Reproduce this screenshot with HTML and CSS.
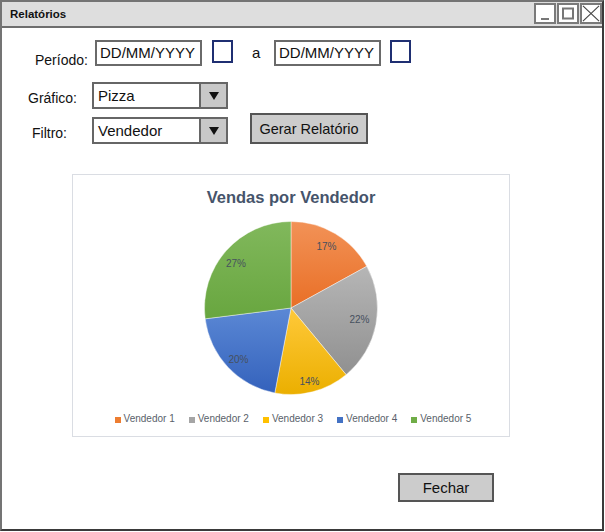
FILE: index.html
```html
<!DOCTYPE html>
<html lang="pt">
<head>
<meta charset="utf-8">
<title>Relatórios</title>
<link rel="stylesheet" href="styles.css">
</head>
<body>
<div class="window">
  <div class="titlebar">
    <span class="title">Relatórios</span>
    <div class="controls">
      <span class="ctl"><svg width="18" height="17" viewBox="0 0 18 17"><line x1="5" y1="14" x2="13" y2="14" stroke="#777" stroke-width="2"/></svg></span>
      <span class="ctl"><svg width="18" height="17" viewBox="0 0 18 17"><rect x="4" y="3.5" width="10" height="10" fill="none" stroke="#777" stroke-width="2"/></svg></span>
      <span class="ctl"><svg width="19" height="17" viewBox="0 0 19 17"><line x1="1" y1="0.5" x2="18" y2="16.5" stroke="#444" stroke-width="1.2"/><line x1="18" y1="0.5" x2="1" y2="16.5" stroke="#444" stroke-width="1.2"/></svg></span>
    </div>
  </div>
  <div class="content">
    <div class="row row-period">
      <span class="label label-period">Período:</span>
      <div class="field">DD/MM/YYYY</div>
      <span class="check"></span>
      <span class="sep">a</span>
      <div class="field">DD/MM/YYYY</div>
      <span class="check check-2"></span>
    </div>
    <div class="row row-graph">
      <span class="label label-graph">Gráfico:</span>
      <div class="select"><span class="select-text">Pizza</span><span class="select-arrow"><svg width="10" height="8" viewBox="0 0 10 8"><path d="M0,0 L10,0 L5,8 Z" fill="#111"/></svg></span></div>
    </div>
    <div class="row row-filter">
      <span class="label label-filter">Filtro:</span>
      <div class="select select-filter"><span class="select-text">Vendedor</span><span class="select-arrow"><svg width="10" height="8" viewBox="0 0 10 8"><path d="M0,0 L10,0 L5,8 Z" fill="#111"/></svg></span></div>
      <button class="btn btn-gerar">Gerar Relatório</button>
    </div>
    <div class="chart">
      <div class="chart-title">Vendas por Vendedor</div>
      <svg class="pie" width="180" height="178" viewBox="0 0 180 178">
        <defs>
          <linearGradient id="gO" x1="0" y1="0" x2="0" y2="1"><stop offset="0" stop-color="#F29257"/><stop offset="1" stop-color="#E96F26"/></linearGradient>
          <linearGradient id="gG" x1="0" y1="0" x2="0" y2="1"><stop offset="0" stop-color="#B6B6B6"/><stop offset="1" stop-color="#909090"/></linearGradient>
          <linearGradient id="gY" x1="0" y1="0" x2="0" y2="1"><stop offset="0" stop-color="#FFC93A"/><stop offset="1" stop-color="#EBAF00"/></linearGradient>
          <linearGradient id="gB" x1="0" y1="0" x2="0" y2="1"><stop offset="0" stop-color="#5B88D5"/><stop offset="1" stop-color="#3462BC"/></linearGradient>
          <linearGradient id="gV" x1="0" y1="0" x2="0" y2="1"><stop offset="0" stop-color="#81B85C"/><stop offset="1" stop-color="#68A63F"/></linearGradient>
        </defs>
        <g stroke="#ffffff" stroke-width="0.6" stroke-opacity="0.7">
          <path d="M90,89 L90,2.5 A86.5,86.5 0 0 1 165.80,47.32 Z" fill="url(#gO)"/>
          <path d="M90,89 L165.80,47.32 A86.5,86.5 0 0 1 145.13,155.65 Z" fill="url(#gG)"/>
          <path d="M90,89 L145.13,155.65 A86.5,86.5 0 0 1 73.79,173.97 Z" fill="url(#gY)"/>
          <path d="M90,89 L73.79,173.97 A86.5,86.5 0 0 1 4.18,99.84 Z" fill="url(#gB)"/>
          <path d="M90,89 L4.18,99.84 A86.5,86.5 0 0 1 90,2.5 Z" fill="url(#gV)"/>
        </g>
        <g class="pct">
          <text x="125.5" y="30.5">17%</text>
          <text x="158.5" y="104">22%</text>
          <text x="108.5" y="166">14%</text>
          <text x="37.5" y="143.5">20%</text>
          <text x="35" y="47.5">27%</text>
        </g>
      </svg>
      <div class="legend">
        <span class="item"><i class="sw sw-1"></i>Vendedor 1</span>
        <span class="item"><i class="sw sw-2"></i>Vendedor 2</span>
        <span class="item"><i class="sw sw-3"></i>Vendedor 3</span>
        <span class="item"><i class="sw sw-4"></i>Vendedor 4</span>
        <span class="item"><i class="sw sw-5"></i>Vendedor 5</span>
      </div>
    </div>
    <div class="footer">
      <button class="btn btn-fechar">Fechar</button>
    </div>
  </div>
</div>
</body>
</html>
```

FILE: styles.css
```css
* { box-sizing: border-box; }
html, body { margin: 0; padding: 0; background: #ffffff; }
body { font-family: "Liberation Sans", Arial, sans-serif; color: #111; }

.window {
  width: 604px;
  height: 531px;
  border: 2px solid #747474;
  border-right-color: #3a3a3a;
  border-bottom-color: #3a3a3a;
  background: #ffffff;
  display: flex;
  flex-direction: column;
}

.titlebar {
  height: 26px;
  flex: none;
  background: #dedede;
  border-bottom: 2px solid #6e6e6e;
  display: flex;
  align-items: flex-start;
}
.title {
  font-weight: bold;
  font-size: 11.5px;
  line-height: 24px;
  padding-left: 8px;
  color: #111;
}
.controls {
  margin-left: auto;
  display: flex;
  gap: 1px;
  padding-top: 1px;
}
.ctl {
  width: 22px;
  height: 21px;
  border: 2px solid #7a7a7a;
  background: #ffffff;
  display: flex;
  align-items: center;
  justify-content: center;
}

.content { flex: 1; display: flex; flex-direction: column; }

.row { display: flex; align-items: flex-start; flex: none; }
.row-period { margin-top: 12px; height: 26px; }
.row-graph { margin-top: 16px; height: 27px; }
.row-filter { margin-top: 4px; height: 31px; }

.label { font-size: 14px; line-height: 18px; white-space: nowrap; }
.label-period { margin-left: 33px; width: 60px; margin-top: 11px; }
.label-graph { margin-left: 26px; width: 64px; margin-top: 7px; }
.label-filter { margin-left: 30px; width: 60px; margin-top: 11px; }

.field {
  width: 107px;
  height: 26px;
  border: 2px solid #6a6a6a;
  font-size: 15px;
  line-height: 22px;
  padding-left: 3px;
  white-space: nowrap;
}
.check {
  width: 21px;
  height: 23px;
  margin-left: 10px;
  border: 2px solid #1f2f72;
}
.check-2 { margin-left: 9px; }
.sep {
  width: 41px;
  font-size: 15px;
  line-height: 26px;
  padding-left: 19px;
}

.select {
  width: 136px;
  height: 27px;
  border: 2px solid #666;
  display: flex;
}
.select-filter { margin-top: 4px; }
.select-text {
  flex: 1;
  font-size: 15px;
  line-height: 23px;
  padding-left: 4px;
}
.select-arrow {
  width: 27px;
  border-left: 2px solid #666;
  background: #c8c8c8;
  display: flex;
  align-items: center;
  justify-content: center;
}

.btn {
  font-family: "Liberation Sans", Arial, sans-serif;
  background: #cccccc;
  border: 2px solid #555;
  color: #111;
  padding: 0;
  cursor: default;
}
.btn-gerar {
  width: 118px;
  height: 31px;
  margin-left: 22px;
  font-size: 14.5px;
}

.chart {
  flex: none;
  margin-top: 30px;
  margin-left: 70px;
  width: 438px;
  height: 263px;
  border: 1px solid #dadde3;
  display: flex;
  flex-direction: column;
  align-items: center;
}
.chart-title {
  margin-top: 10px;
  font-size: 16.5px;
  line-height: 24px;
  font-weight: bold;
  color: #46546b;
}
.pie { display: block; margin-top: 10px; }
.pct text {
  font-family: "Liberation Sans", Arial, sans-serif;
  font-size: 10px;
  fill: #46505e;
  text-anchor: middle;
}
.legend {
  margin-top: 15px;
  display: flex;
  gap: 14px;
  font-size: 10px;
  line-height: 14px;
  color: #5a5f6a;
  padding-left: 4px;
}
.item { display: flex; align-items: center; }
.sw { display: inline-block; width: 6px; height: 6px; margin-right: 3px; margin-top: 2px; }
.sw-1 { background: #ED7D31; }
.sw-2 { background: #A5A5A5; }
.sw-3 { background: #FFC000; }
.sw-4 { background: #4472C4; }
.sw-5 { background: #70AD47; }

.footer { margin-top: 36px; display: flex; flex: none; }
.btn-fechar {
  margin-left: 396px;
  width: 96px;
  height: 29px;
  font-size: 15px;
}
```
